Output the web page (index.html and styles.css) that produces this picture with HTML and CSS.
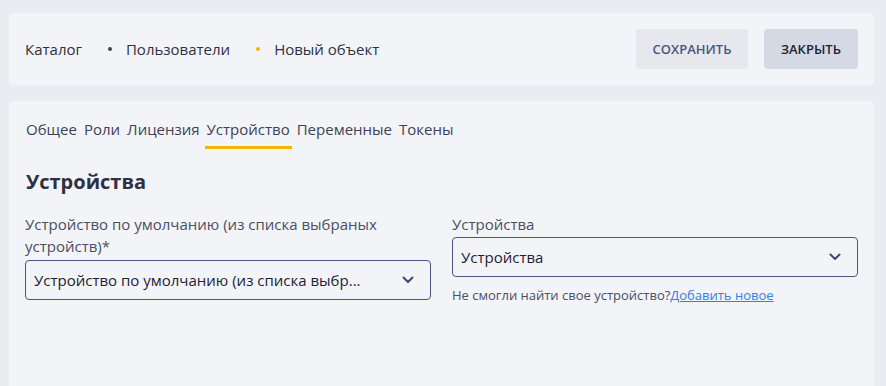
FILE: index.html
```html
<!DOCTYPE html>
<html lang="ru">
<head>
   <meta charset="UTF-8">
   <meta name="viewport" content="width=device-width, initial-scale=1.0">
   <title>Новый объект</title>
   <link rel="stylesheet" href="styles.css">
</head>
<body>
   <div class="page">
       <div class="card header">
           <div class="breadcrumbs">
               <span class="crumb">Каталог</span>
               <span class="dot"></span>
               <span class="crumb">Пользователи</span>
               <span class="dot active"></span>
               <span class="crumb">Новый объект</span>
           </div>
           <div class="actions">
               <button class="btn btn-save">Сохранить</button>
               <button class="btn btn-close">Закрыть</button>
           </div>
       </div>

       <div class="card content">
           <div class="tabs">
               <span class="tab">Общее</span>
               <span class="tab">Роли</span>
               <span class="tab">Лицензия</span>
               <span class="tab active">Устройство</span>
               <span class="tab">Переменные</span>
               <span class="tab">Токены</span>
           </div>

           <h2>Устройства</h2>

           <div class="form-grid">
               <div class="field">
                   <label>Устройство по умолчанию (из списка выбраных устройств)*</label>
                   <div class="select">
                       <span class="select-value">Устройство по умолчанию (из списка выбр...</span>
                       <svg class="chevron" width="12" height="8" viewBox="0 0 12 8"><path d="M1.5 1.5 6 6l4.5-4.5" fill="none" stroke="currentColor" stroke-width="2" stroke-linecap="round" stroke-linejoin="round"/></svg>
                   </div>
               </div>
               <div class="field">
                   <label>Устройства</label>
                   <div class="select">
                       <span class="select-value">Устройства</span>
                       <svg class="chevron" width="12" height="8" viewBox="0 0 12 8"><path d="M1.5 1.5 6 6l4.5-4.5" fill="none" stroke="currentColor" stroke-width="2" stroke-linecap="round" stroke-linejoin="round"/></svg>
                   </div>
                   <div class="hint">Не смогли найти свое устройство?<a href="#">Добавить новое</a></div>
               </div>
           </div>
       </div>
   </div>
</body>
</html>
```

FILE: styles.css
```css
* {
    box-sizing: border-box;
}

html, body {
    height: 100%;
}

body {
    margin: 0;
    background: #ebecf1;
    font-family: "Open Sans", "Noto Sans", sans-serif;
    font-size: 15px;
    color: #2d3142;
}

.page {
    display: flex;
    flex-direction: column;
    gap: 16px;
    height: 100%;
    padding: 13px 12px 0 9px;
}

.card {
    background: #f3f4f8;
    border-radius: 4px;
}

/* Шапка */
.header {
    display: flex;
    align-items: center;
    justify-content: space-between;
    padding: 16px;
}

.breadcrumbs {
    display: flex;
    align-items: center;
}

.crumb {
    color: #2d3142;
}

.dot {
    width: 4px;
    height: 4px;
    border-radius: 50%;
    background: #3d4257;
    margin: 0 14px 0 26px;
}

.dot.active {
    background: #f5b400;
}

.actions {
    display: flex;
    gap: 16px;
}

.btn {
    height: 40px;
    padding: 0;
    border: none;
    border-radius: 4px;
    font-family: inherit;
    font-size: 13px;
    font-weight: 600;
    text-transform: uppercase;
    cursor: pointer;
}

.btn-save {
    width: 112px;
    background: #e6e8ee;
    color: #4b5580;
}

.btn-close {
    width: 94px;
    background: #d5d9e3;
    color: #1e2235;
}

/* Контент */
.content {
    flex: 1;
    padding: 16px 16px 0 15px;
    border-radius: 4px 4px 0 0;
}

.tabs {
    display: flex;
    gap: 3px;
}

.tab {
    padding: 2px 2px 7px;
    border-bottom: 3px solid transparent;
    color: #3d4257;
}

.tab.active {
    border-bottom-color: #f5b400;
}

h2 {
    margin: 19px 0 18px 2px;
    font-size: 20px;
    line-height: 27px;
    font-weight: 700;
    color: #2d3142;
}

.form-grid {
    display: grid;
    grid-template-columns: 1fr 1fr;
    gap: 21px;
    padding-left: 1px;
    align-items: start;
}

.field label {
    display: block;
    line-height: 22px;
    color: #4a4f63;
    margin-bottom: 2px;
}

.field:first-child .select {
    margin-top: 3px;
}

.select {
    display: flex;
    align-items: center;
    height: 40px;
    padding: 0 16px 0 8px;
    border: 1px solid #4b5580;
    border-radius: 4px;
    color: #1e2235;
}

.select-value {
    flex: 1;
    white-space: nowrap;
    overflow: hidden;
}

.chevron {
    margin-left: auto;
    color: #3f4870;
}

.hint {
    margin-top: 9px;
    font-size: 13px;
    color: #4a4f63;
}

.hint a {
    color: #2f80ed;
}
```
